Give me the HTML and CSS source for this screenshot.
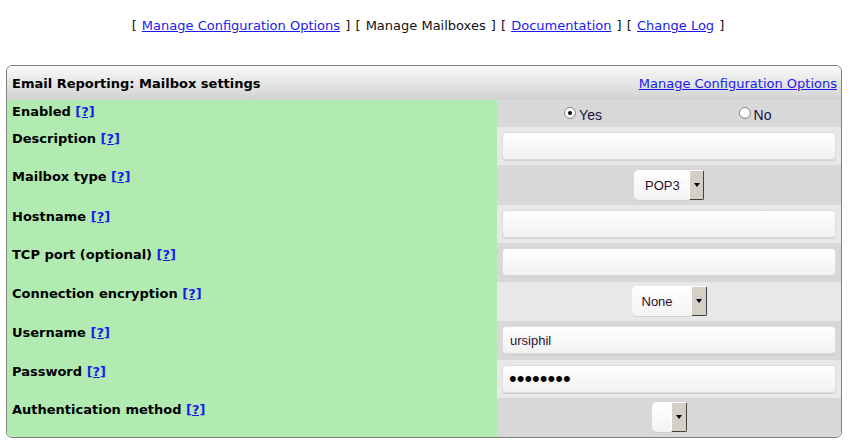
FILE: index.html
```html
<!DOCTYPE html>
<html>
<head>
<meta charset="utf-8">
<link rel="stylesheet" href="styles.css">
</head>
<body>
<div class="nav">[ <a href="#">Manage Configuration Options</a> ] [ <span class="cur">Manage Mailboxes</span> ] [ <a href="#">Documentation</a> ] [ <a href="#">Change Log</a> ]</div>
<div class="box">
  <div class="head">
    <span class="title">Email Reporting: Mailbox settings</span>
    <a href="#" class="headlink">Manage Configuration Options</a>
  </div>
  <div class="row dark r-radio">
    <div class="label">Enabled <a href="#">[?]</a></div>
    <div class="field radios">
      <label class="opt"><span class="radio on"></span>Yes</label>
      <label class="opt"><span class="radio"></span>No</label>
    </div>
  </div>
  <div class="row light r-text">
    <div class="label">Description <a href="#">[?]</a></div>
    <div class="field"><input class="txt" type="text" value=""></div>
  </div>
  <div class="row dark r-sel">
    <div class="label">Mailbox type <a href="#">[?]</a></div>
    <div class="field center"><span class="sel w-pop"><span class="sel-val">POP3</span><span class="sel-btn"><span class="arrow"></span></span></span></div>
  </div>
  <div class="row light r-text">
    <div class="label">Hostname <a href="#">[?]</a></div>
    <div class="field"><input class="txt" type="text" value=""></div>
  </div>
  <div class="row dark r-text2">
    <div class="label">TCP port (optional) <a href="#">[?]</a></div>
    <div class="field"><input class="txt" type="text" value=""></div>
  </div>
  <div class="row light r-sel2">
    <div class="label">Connection encryption <a href="#">[?]</a></div>
    <div class="field center"><span class="sel w-none"><span class="sel-val">None</span><span class="sel-btn"><span class="arrow"></span></span></span></div>
  </div>
  <div class="row dark r-text2">
    <div class="label">Username <a href="#">[?]</a></div>
    <div class="field"><input class="txt" type="text" value="ursiphil"></div>
  </div>
  <div class="row light r-text">
    <div class="label">Password <a href="#">[?]</a></div>
    <div class="field"><input class="txt pw" type="password" value="abcdefgh"></div>
  </div>
  <div class="row dark r-sel2 last">
    <div class="label">Authentication method <a href="#">[?]</a></div>
    <div class="field center"><span class="sel w-auth"><span class="sel-val"></span><span class="sel-btn"><span class="arrow"></span></span></span></div>
  </div>
</div>
</body>
</html>
```
FILE: styles.css
```css
html, body { margin: 0; padding: 0; background: #fff; }
body { font-family: "DejaVu Sans", Verdana, sans-serif; font-size: 13px; color: #000; }
a { color: #1a1aee; text-decoration: underline; }
.nav { text-align: center; padding-top: 18px; height: 65px; box-sizing: border-box; line-height: 16px; color: #111; word-spacing: 1px; padding-left: 2px; }
.nav a, .nav .cur { word-spacing: 0; }
.box { margin: 0 12px 0 6px; border: 1px solid #7f7f7f; border-radius: 6px; overflow: hidden; }
.head { height: 34px; display: flex; align-items: center; justify-content: space-between; padding: 0 4px 0 5px;
  background: linear-gradient(#f9f9f9, #d2d2d2); }
.title { font-weight: bold; }
.row { display: grid; grid-template-columns: 490px 1fr; }
.label { background: #b1ebb1; font-weight: bold; padding: 4px 5px 0; line-height: 16px; }
.label a { font-weight: bold; }
.dark .field { background: #d8d8d8; }
.light .field { background: #e8e8e8; }
.r-radio { height: 27px; }
.r-text { height: 38px; }
.r-text2 { height: 39px; }
.r-sel { height: 40px; }
.r-sel2 { height: 39px; }
.field { padding: 5px 5px 0 5px; box-sizing: border-box; }
.center { display: flex; justify-content: center; }
.r-sel .field { padding-top: 5px; }
.r-sel2 .field { padding-top: 4px; }
.txt { display: block; box-sizing: border-box; width: 100%; height: 28px; margin: 0; border: 1px solid #dcdcdc;
  border-radius: 4px; background: linear-gradient(#ffffff, #f1f1f1); font-family: "Liberation Sans", Arial, sans-serif;
  font-size: 13px; color: #2a1030; padding: 0 7px; outline: none; box-shadow: 0 1px 0 #cfcfcf; }
.pw { font-size: 22px; letter-spacing: 0; color: #000; padding-left: 6px; }
.radios { display: grid; grid-template-columns: 1fr 1fr; padding: 0; font-family: "Liberation Sans", Arial, sans-serif; font-size: 14px; color: #1a1040; }
.opt { display: flex; align-items: center; justify-content: center; padding-top: 3px; }
.radio { width: 12px; height: 12px; border-radius: 50%; border: 1px solid #8a8a8a; box-sizing: border-box;
  background: radial-gradient(circle at 40% 40%, #ffffff 40%, #dcdcdc); margin-right: 3px; position: relative; top: -2px; }
.radio.on::after { content: ""; position: absolute; left: 3px; top: 3px; width: 4px; height: 4px; border-radius: 50%; background: #000; }
.sel { display: inline-flex; height: 30px; }
.sel-val { flex: 1; background: linear-gradient(#ffffff, #f3f3f3); border-radius: 5px 0 0 5px; display: flex; align-items: center;
  font-family: "Liberation Sans", Arial, sans-serif; font-size: 13px; color: #2a1030; padding-left: 11px; box-shadow: 0 1px 0 #cfcfcf; }
.sel-btn { width: 15px; box-sizing: border-box; background: #d4d0c8; border-left: 1px solid #fff; border-top: 1px solid #fff;
  border-right: 1px solid #404040; border-bottom: 1px solid #404040; display: flex; align-items: center; justify-content: center; border-radius: 0 2px 2px 0; }
.arrow { width: 0; height: 0; border-left: 3px solid transparent; border-right: 3px solid transparent; border-top: 4px solid #000; }
.w-pop { width: 70px; }
.w-none { width: 75px; }
.w-none .sel-btn { width: 16px; }
.w-none .sel-val { padding-left: 10px; }
.w-auth { width: 35px; }
.w-auth .sel-btn { width: 16px; }
```
